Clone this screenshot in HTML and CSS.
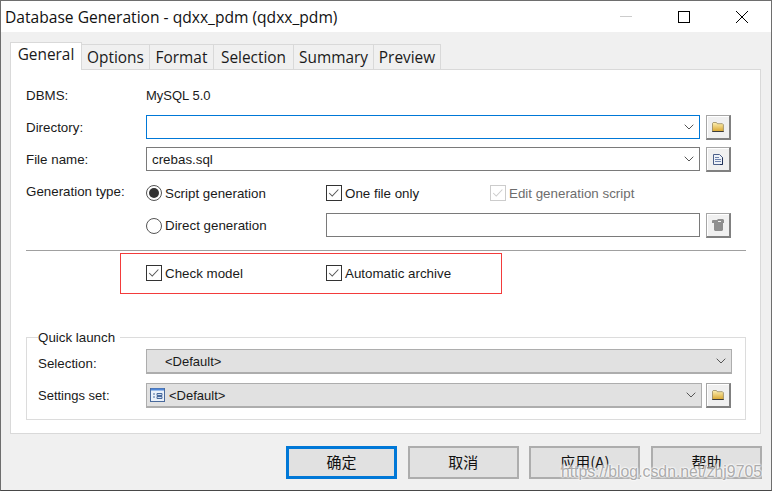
FILE: index.html
```html
<!DOCTYPE html>
<html lang="en">
<head>
<meta charset="utf-8">
<title>Database Generation</title>
<link rel="stylesheet" href="styles.css">
</head>
<body>
<svg class="defs" width="0" height="0" aria-hidden="true">
  <defs>
    <linearGradient id="fold" x1="0" y1="0" x2="0" y2="1">
      <stop offset="0" stop-color="#fdf0b4"/>
      <stop offset="1" stop-color="#d9a62e"/>
    </linearGradient>
    <symbol id="chev" viewBox="0 0 10 6"><path d="M.7.7 5 5 9.3.7" fill="none" stroke="#555" stroke-width="1"/></symbol>
    <symbol id="tick" viewBox="0 0 16 16"><path d="M2.5 8 6 11.5 13 4" fill="none" stroke="currentColor" stroke-width="1.2"/></symbol>
    <symbol id="folder" viewBox="0 0 12 10"><path d="M.5 9.5V1.2L1.2.5h3.2l.8 1.2h5.2l1 1v6.8z" fill="url(#fold)" stroke="#7a6a3a" stroke-width=".6"/><path d="M.3 9.5h11.4" stroke="#3c3c3c"/></symbol>
  </defs>
</svg>
<div class="window">
  <header class="titlebar">
    <span class="title">Database Generation - qdxx_pdm (qdxx_pdm)</span>
    <div class="controls">
      <span class="ctl"><svg width="12" height="12" viewBox="0 0 12 12"><path d="M0 5.5h12" stroke="#ccc"/></svg></span>
      <span class="ctl"><svg width="12" height="12" viewBox="0 0 12 12"><rect x=".5" y=".5" width="11" height="11" fill="none" stroke="#000"/></svg></span>
      <span class="ctl"><svg width="12" height="12" viewBox="0 0 12 12"><path d="M0 0l12 12M12 0 0 12" stroke="#000"/></svg></span>
    </div>
  </header>
  <main class="client">
    <nav class="tabs">
      <span class="tab active">General</span>
      <span class="tab">Options</span>
      <span class="tab">Format</span>
      <span class="tab">Selection</span>
      <span class="tab">Summary</span>
      <span class="tab">Preview</span>
    </nav>
    <section class="panel">
      <div class="row row-dbms">
        <span class="label">DBMS:</span>
        <span class="tight">MySQL 5.0</span>
      </div>
      <div class="row row-dir">
        <span class="label">Directory:</span>
        <div class="combo focus"><span class="combo-text"></span><svg class="chev"><use href="#chev"/></svg></div>
        <button class="ibtn"><svg class="ico-folder"><use href="#folder"/></svg></button>
      </div>
      <div class="row row-file">
        <span class="label">File name:</span>
        <div class="combo"><span class="combo-text">crebas.sql</span><svg class="chev"><use href="#chev"/></svg></div>
        <button class="ibtn">
          <svg class="ico-doc" viewBox="0 0 10 11"><path d="M.5.5h6l3 3v7H.5z" fill="#eef2f8" stroke="#4c5f88"/><path d="M2 3.5h4M2 5.5h6M2 7.5h6" stroke="#6f83ad"/><path d="M9.5 3.5v7H7" fill="none" stroke="#1f2f55"/></svg>
        </button>
      </div>
      <div class="row row-type">
        <span class="label label-up">Generation type:</span>
        <div class="opt opt-a"><span class="radio on"></span><span>Script generation</span></div>
        <div class="opt opt-b"><span class="check"><svg><use href="#tick"/></svg></span><span>One file only</span></div>
        <div class="opt disabled"><span class="check"><svg><use href="#tick"/></svg></span><span>Edit generation script</span></div>
      </div>
      <div class="row row-direct">
        <span class="label"></span>
        <div class="opt opt-a"><span class="radio"></span><span>Direct generation</span></div>
        <div class="input"></div>
        <button class="ibtn">
          <svg class="ico-gray" viewBox="0 0 12 12"><path d="M0 1.5 1 1h4l1-1h5l1 1v3h-1v7l-1 1H3l-1-1V4H0z" fill="#8e8e8e"/><path d="M6 2h3v1H6z" fill="#f0f0f0"/></svg>
        </button>
      </div>
      <hr class="sep">
      <div class="row row-check">
        <span class="label"></span>
        <div class="opt opt-a"><span class="check"><svg><use href="#tick"/></svg></span><span>Check model</span></div>
        <div class="opt opt-b"><span class="check"><svg><use href="#tick"/></svg></span><span>Automatic archive</span></div>
      </div>
      <fieldset class="group">
        <legend>Quick launch</legend>
        <div class="row row-sel">
          <span class="label label-g label-down">Selection:</span>
          <div class="combo gray"><span class="combo-text text-indent">&lt;Default&gt;</span><svg class="chev"><use href="#chev"/></svg></div>
        </div>
        <div class="row row-set">
          <span class="label label-g tight">Settings set:</span>
          <div class="combo gray">
            <svg class="ico-set" viewBox="0 0 15 14"><rect x=".5" y=".5" width="14" height="13" fill="#eaf1fa" stroke="#4a6a9c"/><path d="M1 1.5h13" stroke="#4f86d8" stroke-width="2"/><path d="M3 6h2M3 9h2M7 5.5h5v2H7zM7 8.5h5v2H7z" fill="#cfe0f5" stroke="#4a6a9c"/></svg>
            <span class="combo-text text-icon">&lt;Default&gt;</span><svg class="chev"><use href="#chev"/></svg>
          </div>
          <button class="ibtn ibtn-set"><svg class="ico-folder"><use href="#folder"/></svg></button>
        </div>
      </fieldset>
    </section>
    <footer class="actions">
      <button class="btn primary">确定</button>
      <button class="btn">取消</button>
      <button class="btn">应用(A)</button>
      <button class="btn">帮助</button>
    </footer>
    <div class="note-box"></div>
    <div class="watermark">https://blog.csdn.net/zhj9705</div>
  </main>
</div>
</body>
</html>
```

FILE: styles.css
```css
* { box-sizing: border-box; }
html, body { margin: 0; padding: 0; }
body {
  width: 772px;
  height: 491px;
  overflow: hidden;
  font-family: "Liberation Sans", Arial, "Noto Sans CJK SC", sans-serif;
  font-size: 13.35px;
  color: #1a1a1a;
  background: #f0f0f0;
}
.defs { position: absolute; }
.tight { font-size: 13px; }
.window {
  width: 772px;
  height: 491px;
  display: flex;
  flex-direction: column;
  border: 1px solid #6e6e6e;
  border-bottom-color: #474747;
  background: #f0f0f0;
}
.titlebar {
  height: 31px;
  flex: none;
  display: flex;
  align-items: center;
  justify-content: space-between;
  padding-left: 4px;
  background: #fff;
}
.title {
  font-family: "Open Sans", sans-serif;
  font-size: 15.6px;
  color: #111;
  position: relative;
}
.controls { display: flex; }
.ctl {
  width: 58px;
  height: 31px;
  display: flex;
  align-items: center;
  justify-content: center;
}
.client {
  flex: 1;
  display: flex;
  flex-direction: column;
  padding: 10px 10px 0 9px;
  position: relative;
  min-height: 0;
}
.tabs {
  display: grid;
  grid-template-columns: 72px 68px 64px 80px 80px 67px;
  align-items: end;
  height: 27px;
  flex: none;
}
.tab {
  height: 25px;
  border: 1px solid #d9d9d9;
  border-bottom: 0;
  border-left: 0;
  background: #f0f0f0;
  text-align: center;
  font-family: "Open Sans", sans-serif;
  font-size: 15.4px;
  line-height: 25px;
  color: #1a1a1a;
}
.tab.active {
  height: 28px;
  margin-bottom: -1px;
  border: 1px solid #d9d9d9;
  border-bottom: 0;
  background: #fff;
  line-height: 24px;
  position: relative;
  z-index: 1;
}
.panel {
  flex: 1;
  min-height: 0;
  background: #fff;
  border: 1px solid #d9d9d9;
  padding: 15px 14px 0 15px;
}
.row { display: flex; align-items: center; }
.label { width: 120px; flex: none; }
.label-g { width: 108px; }
.label-up { position: relative; top: -2px; }
.label-down { position: relative; top: 2px; }
.row-dbms { height: 20px; }
.row-dir { height: 25px; margin-top: 10px; padding-right: 15px; }
.row-file { height: 25px; margin-top: 7px; padding-right: 15px; }
.row-type { height: 20px; margin-top: 11px; }
.row-direct { height: 25px; margin-top: 10px; padding-right: 15px; }
.row-check { height: 20px; margin-top: 12px; }
.sep {
  height: 1px;
  margin: 12px 0 0;
  border: 0;
  background: #a0a0a0;
}
.combo {
  flex: 1;
  height: 24px;
  align-self: flex-start;
  display: flex;
  align-items: center;
  background: #fff;
  border: 1px solid #7a7a7a;
  padding: 0 5px;
  min-width: 0;
}
.combo.focus { border-color: #0078d7; }
.combo.gray {
  height: 25px;
  background: #e1e1e1;
  border-color: #adadad;
  border-width: 1px 1px 2px;
  padding: 0 5px 0 3px;
  font-size: 13px;
}
.combo-text { flex: 1; white-space: nowrap; }
.text-indent { padding-left: 15px; }
.text-icon { padding-left: 4px; }
.chev { width: 10px; height: 6px; flex: none; }
.ibtn {
  width: 25px;
  height: 25px;
  flex: none;
  margin-left: 6px;
  padding: 0;
  display: flex;
  align-items: center;
  justify-content: center;
  background: #f0f0f0;
  border: 1px solid #a6a6a6;
  border-right: 2px solid #808080;
  border-bottom: 2px solid #808080;
  box-shadow: inset 1px 1px 0 #fff;
}
.ibtn-set { margin-left: 4px; margin-right: 1px; }
.ico-folder { width: 12px; height: 10px; }
.ico-doc { width: 10px; height: 11px; }
.ico-gray { width: 12px; height: 12px; }
.ico-set { width: 15px; height: 14px; flex: none; }
.opt { display: flex; align-items: center; gap: 3px; white-space: nowrap; }
.opt-a { width: 180px; flex: none; }
.opt-b { width: 164px; flex: none; }
.disabled { color: #6d6d6d; }
.radio {
  width: 16px;
  height: 16px;
  border: 1px solid #555;
  border-radius: 50%;
  background: #fff;
  flex: none;
  position: relative;
}
.radio.on::after {
  content: "";
  position: absolute;
  inset: 2px;
  border-radius: 50%;
  background: #333;
}
.check {
  width: 16px;
  height: 16px;
  flex: none;
  border: 1px solid #333;
  background: #fff;
  color: #555;
  display: flex;
}
.check svg { width: 14px; height: 14px; }
.disabled .check { border-color: #ccc; color: #ccc; }
.input {
  flex: 1;
  height: 24px;
  align-self: flex-start;
  background: #fff;
  border: 1px solid #7a7a7a;
}
.group {
  margin: 45px 0 0;
  padding: 3px 13px 11px 11px;
  border: 1px solid #dcdcdc;
  min-width: 0;
}
.group legend {
  padding: 0 5px 0 0;
  height: 18px;
  line-height: 20px;
  margin-left: 0;
}
.row-sel { height: 25px; }
.row-set { height: 25px; margin-top: 9px; }
.actions {
  flex: none;
  display: flex;
  justify-content: flex-end;
  gap: 10.67px;
  padding: 12px 0 11px;
  margin-right: -1px;
}
.btn {
  width: 111px;
  height: 33px;
  padding: 0 0 2px;
  background: #e1e1e1;
  border: 2px solid #adadad;
  font-family: "Noto Sans CJK SC", "Liberation Sans", sans-serif;
  font-size: 15px;
  color: #111;
}
.btn.primary { border: 3px solid #0078d7; }
.note-box {
  position: absolute;
  left: 119px;
  top: 221px;
  width: 382px;
  height: 41px;
  border: 1px solid #f33b3b;
  pointer-events: none;
}
.watermark {
  position: absolute;
  right: 9px;
  bottom: 7px;
  font-size: 15.8px;
  line-height: 22px;
  white-space: nowrap;
  color: rgba(150, 150, 150, .8);
  text-shadow: 0 0 2px #fff, 0 0 2px #fff, 0 0 3px #fff;
}
```
